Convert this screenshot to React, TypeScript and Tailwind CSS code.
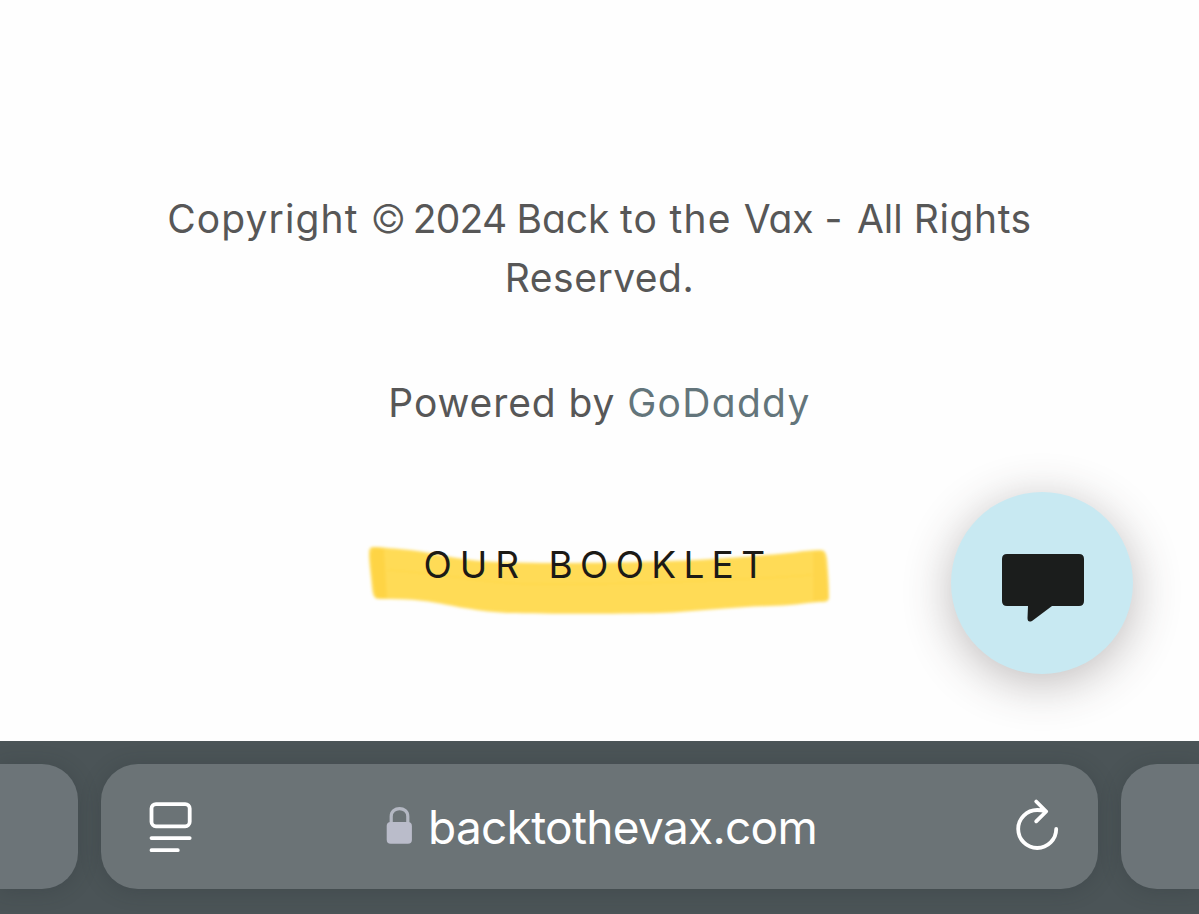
const singleStorey = "[font-feature-settings:'cv11'_1,'kern'_1]";

const copyright = [
  { text: 'Copyright', spacing: 'tracking-[1.1px]' },
  { text: '©', spacing: 'font-light tracking-[-2.2px]' },
  { text: '2024', spacing: 'tracking-[-0.8px]' },
  { text: 'Back', spacing: 'tracking-[-0.1px]' },
  { text: 'to', spacing: 'tracking-[0.9px]' },
  { text: 'the', spacing: 'tracking-[1.15px]' },
  { text: 'Vax', spacing: 'tracking-[-0.1px]' },
  { text: '-', spacing: 'tracking-[1.8px]' },
  { text: 'All', spacing: 'tracking-[0px]' },
  { text: 'Rights', spacing: 'tracking-[0.6px]' },
];

function Highlight() {
  return (
    <svg
      className="absolute left-0 top-0 h-[90px] w-[490px]"
      viewBox="355 535 490 90"
      fill="none"
      aria-hidden="true"
    >
      <defs>
        <filter id="soften" x="-5%" y="-20%" width="110%" height="140%">
          <feGaussianBlur stdDeviation="1.6" />
        </filter>
      </defs>
      <g filter="url(#soften)">
        <path
          d="M373 547C384 547 395 549 410 550C435 553 455 559 480 561C520 564 590 563 635 562C680 561 720 559 765 555C788 554 805 550 820 550C825 550 826 553 827 559C828 571 829 584 829 597C829 602 825 602 819 602C804 603 788 606 770 606C727 607 695 612 660 613C615 614 550 614 507 613C471 611 447 604 424 601C408 599 394 599 380 599C374 599 373 596 372 588C371 575 369 563 369 554C369 549 370 547 373 547Z"
          fill="#ffdb57"
        />
        <path d="M373 548L384 549L387 598L377 598C373 588 371 562 371 554Z" fill="#fed444" />
        <path d="M813 552L822 552C825 560 827 580 828 599L813 601Z" fill="#fed64b" />
        <path d="M388 570C450 574 480 583 530 584S720 582 812 575" stroke="#fed94f" strokeWidth="3" />
      </g>
    </svg>
  );
}

function ChatButton() {
  return (
    <button
      aria-label="Open chat"
      className="absolute left-[951px] top-[492px] flex size-[182px] items-center justify-center rounded-full bg-[#c8e9f2] shadow-[0_9px_48px_rgba(60,50,50,0.33)]"
    >
      <svg className="size-[182px]" viewBox="951 492 182 182" fill="#1b1d1c">
        <path d="M1007 554H1079Q1084 554 1084 559V601Q1084 606 1079 606H1052L1032 621Q1027.500 623 1027.500 618L1028 606H1007Q1002 606 1002 601V559Q1002 554 1007 554Z" />
      </svg>
    </button>
  );
}

function AddressBar() {
  return (
    <div className="flex h-[173px] gap-[23px] overflow-hidden bg-[#4b5457] pt-[23px]">
      <div className="h-[125px] w-[78px] shrink-0 rounded-r-[36px] bg-[#6c7478] shadow-[0_2px_20px_rgba(40,48,52,0.25)]" />
      <div className="flex h-[125px] w-[997px] shrink-0 items-center rounded-[37px] bg-[#6b7376] pl-[48px] pr-[40px] shadow-[0_2px_20px_rgba(40,48,52,0.25)]">
        <svg
          className="h-[52px] w-[44px]"
          viewBox="0 -0.5 44 52"
          fill="none"
          stroke="white"
          strokeWidth="3.8"
          strokeLinecap="round"
        >
          <rect x="2.500" y="2.600" width="38.200" height="22.200" rx="4.500" />
          <path d="M2.500 36.600H40.700M2.500 48.700H28.800" />
        </svg>
        <div className="ml-[193px] flex items-center">
          <svg className="mb-1 h-[38px] w-[27px]" viewBox="0 0 27 38" fill="none">
            <path d="M5.200 18V10.500C5.200 0 21.800 0 21.800 10.500V18" stroke="#b4b8c3" strokeWidth="3.200" />
            <rect x="0.700" y="16" width="25.200" height="21.800" rx="4" fill="#babcca" />
          </svg>
          <span className="ml-[15px] w-[400px] whitespace-nowrap font-['Inter',sans-serif] text-[46px] leading-[60px] tracking-[-0.7px] text-white">
            backtothevax.com
          </span>
        </div>
        <svg
          className="ml-auto h-[54px] w-[48px] overflow-visible"
          viewBox="1010 799.5 48 54"
          fill="none"
          stroke="white"
          strokeWidth="3.800"
          strokeLinecap="round"
          strokeLinejoin="round"
        >
          <path d="M1056.200 828.500A19 19 0 1 1 1037.200 809.500Q1041 809.500 1046 810.800M1036.200 801L1046.200 811L1036.200 820.800" />
        </svg>
      </div>
      <div className="h-[125px] w-[78px] shrink-0 rounded-l-[36px] bg-[#6c7478] shadow-[0_2px_20px_rgba(40,48,52,0.25)]" />
    </div>
  );
}

export default function App() {
  return (
    <div className="relative flex h-[914px] w-[1199px] flex-col overflow-hidden bg-[#fefefe] font-['Inter',sans-serif]">
      <main className={`flex h-[741px] flex-col items-center pt-[189px] text-[39px] leading-[59px] text-[#575757] ${singleStorey}`}>
        <p className="whitespace-nowrap text-center">
          {copyright.map((word) => (
            <span key={word.text} className={word.spacing}>
              {word.text}{' '}
            </span>
          ))}
          <br />
          <span className="tracking-[0.5px]">Reserved.</span>
        </p>
        <p className="mt-[66px] whitespace-nowrap tracking-[0.9px]">
          Powered by <a className="tracking-[1.3px] text-[#63757b]">GoDaddy</a>
        </p>
        <div className="relative mt-[103px] h-[90px] w-[490px]">
          <Highlight />
          <a className="relative ml-[69px] block whitespace-nowrap text-[37px] tracking-[8px] text-[#1c1a16]">
            OUR <span className="ml-[3px] tracking-[7.3px]">BOOKLET</span>
          </a>
        </div>
      </main>
      <ChatButton />
      <AddressBar />
    </div>
  );
}
